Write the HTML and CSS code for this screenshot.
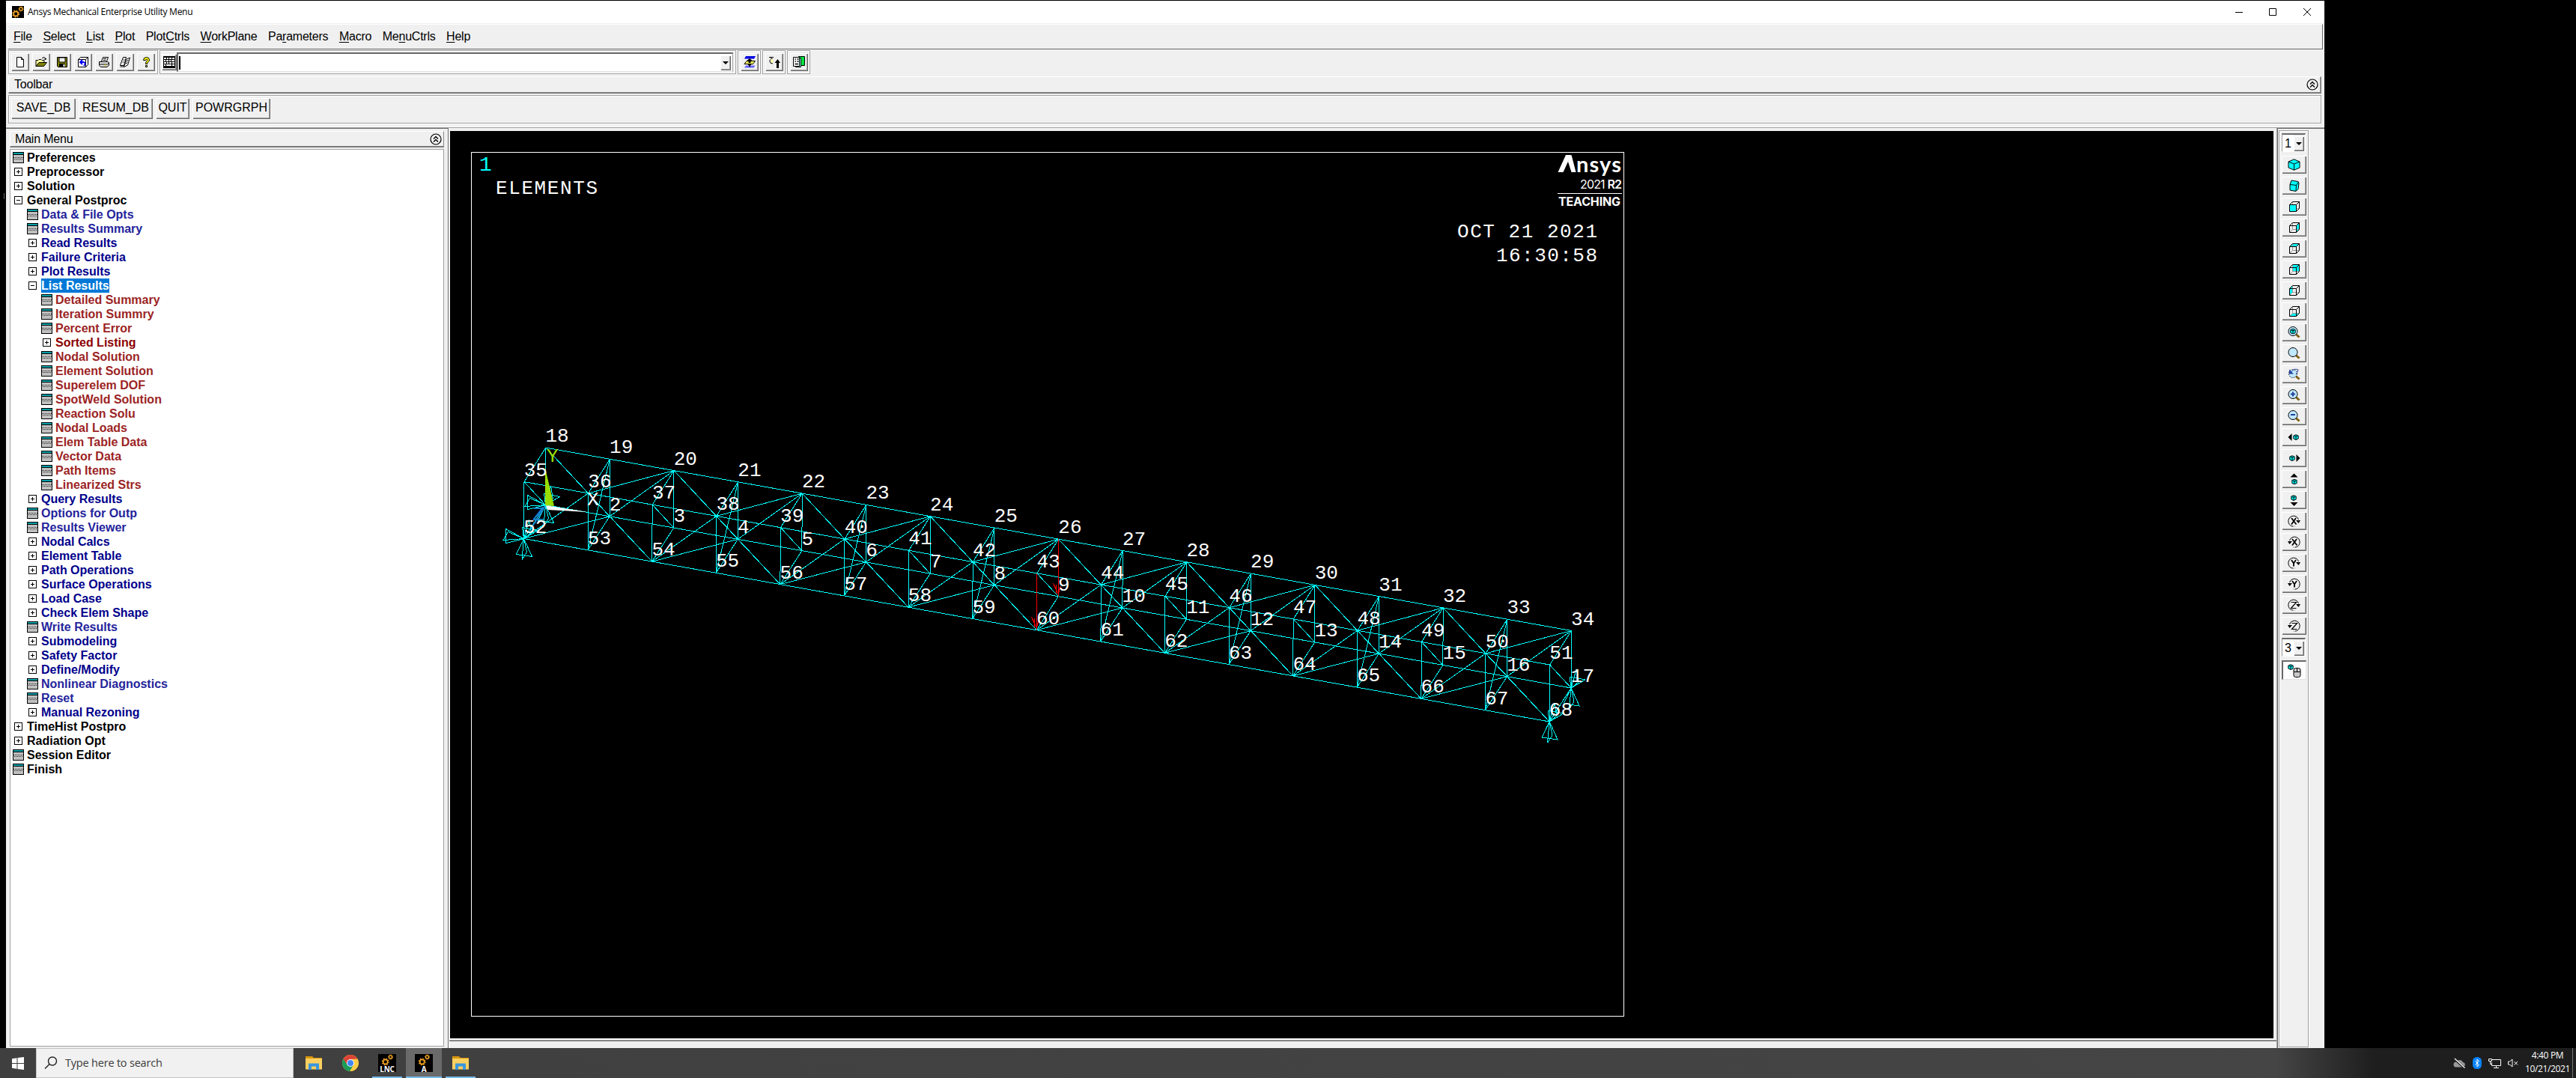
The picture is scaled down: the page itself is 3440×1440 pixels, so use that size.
FILE: index.html
```html
<!DOCTYPE html>
<html lang="en">
<head>
<meta charset="utf-8">
<title>Ansys Mechanical Enterprise Utility Menu</title>
<link rel="stylesheet" href="styles.css">
</head>
<body>
<svg class="defs" aria-hidden="true">
  <defs>
    <symbol id="gears" viewBox="0 0 16 16"><rect width="16" height="16" fill="#000"/><g fill="none" stroke="#f5a623"><circle cx="5.2" cy="10.4" r="3" stroke-width="1.6"/><circle cx="5.2" cy="10.4" r="4.4" stroke-width="1.2" stroke-dasharray="1.7 1.75"/><circle cx="12" cy="4" r="2" stroke-width="1.3"/><circle cx="12" cy="4" r="3.1" stroke-width="1" stroke-dasharray="1.2 1.23"/></g></symbol>
    <symbol id="new" viewBox="0 0 16 16"><path d="M3.5 1.5h6l3 3v10h-9zM9.5 1.5v3h3" fill="#fff" stroke="#000"/></symbol>
    <symbol id="open" viewBox="0 0 16 16"><path d="M1 13.500V5.500h3l1-1h3l1 1h3v3" fill="#ffffa0" stroke="#000"/><path d="M1 13.500l4-5h10.500l-4 5z" fill="#808000" stroke="#000"/><path d="M9 3q2-3 4.500-.5v2M12 3.500l1.500 1.500L15 3" fill="none" stroke="#000"/></symbol>
    <symbol id="save" viewBox="0 0 16 16"><path d="M1.500 1.500h13v13h-12l-1-1z" fill="#808000" stroke="#000"/><path d="M4 2h8v6H4z" fill="#f0f0f0" stroke="#000"/><path d="M4 10h8v4.500H4z"/><path d="M9.500 11h2v3h-2z" fill="#fff"/></symbol>
    <symbol id="resume" viewBox="0 0 16 16"><path d="M1.500 4.500l3-3h10v10l-3 3h-10zM1.500 4.500h10v10M11.500 4.500l3-3" fill="#fff" stroke="#000"/><path d="M4 8h5q2 .5 1.500 3L9 13M7 5L4 8l3 3" fill="none" stroke="#00f" stroke-width="1.800"/></symbol>
    <symbol id="print" viewBox="0 0 16 16"><path d="M4.500 7l2-5.500h7l-2 5.500" fill="#fff" stroke="#000"/><path d="M1.500 7.500h11l2 1v4l-3 2h-8l-2-2zM1.500 11h11l2-2M7 3.500h4M6.500 5.500h4M4 14.500h8" fill="#ddd" stroke="#000"/><path d="M8 12h3" stroke="#cc0"/></symbol>
    <symbol id="report" viewBox="0 0 16 16"><path d="M5.500 1.500h4l-3 11h-5zM9.500 4.500l5-2.500-3 10-5 2.500zM1.500 14h5M5.500 5h2M4.500 8h2M9.500 7l3-1.500M8.500 10l3-1.500" fill="#fff" stroke="#000"/></symbol>
    <symbol id="help" viewBox="0 0 16 16"><path d="M4.500 5.500q0-4 4-4t4 3.500q0 2-2 3.200-.8.600-.8 2.300H7.500q0-3 1.500-4 1-.7.500-2-1.500-1-2 1.000zM7.500 12.500h2v2h-2z" fill="#ff0" stroke="#000"/></symbol>
    <symbol id="keyboard" viewBox="0 0 16 16"><path d="M0 0h16v16H0z"/><path d="M1 2h3v2H1zM5 2h2v2H5zM8 2h3v2H8zM12 2h3v2h-3zM1 5h2v2H1zM4 5h3v2H4zM8 5h2v2H8zM11 5h4v2h-4zM1 8h3v2H1zM5 8h2v2H5zM8 8h3v2H8zM12 8h3v2h-3zM1 11h2v2H1zM4 11h7v2H4zM12 11h3v2h-3z" fill="#fff"/></symbol>
    <symbol id="raise" viewBox="0 0 16 16"><path d="M3 0h13l-2 3.500H1z" fill="#0000e0"/><path d="M4 6.500h11.500l-3 4H1z" fill="#ffff60" stroke="#000"/><path d="M3 12.500h12.500l-2 3H1z" fill="#6464ff"/><path d="M8 3L4.500 6h2v3h3V6h2zM8 9.500L5.500 12H7v2h2v-2h1.500z"/></symbol>
    <symbol id="reset" viewBox="0 0 16 16"><path d="M1 1.500h6M4 1.500v2M6 4q-4-1-4 3 0 3 4 3" fill="none" stroke="#000"/><path d="M3 4h3v5H4z" fill="#ffffa0"/><path d="M12.500 4L8.500 9H11v7h3V9h2z"/></symbol>
    <symbol id="contact" viewBox="0 0 16 16"><path d="M7.500.5h8v12h-8z" fill="#00e040" stroke="#000"/><path d="M3.500 2.500h7v12h-7z" fill="#a0ffff" stroke="#000"/><path d="M.5 1.500h8v12h-8z" fill="#fff" stroke="#000"/><path d="M2.500 4H4M5.500 4h2M2.500 7H4M5.500 7h2M2.500 10.500h4.500" stroke="#000" stroke-width="1.300"/></symbol>
    <symbol id="collapse" viewBox="0 0 16 16"><circle cx="8" cy="8" r="7" fill="none" stroke="#000" stroke-width="1.200"/><path d="M5 7.500L8 4.500l3 3M5 11.500L8 8.500l3 3" fill="none" stroke="#000" stroke-width="1.400"/></symbol>

    <symbol id="iso" viewBox="0 0 17 16"><path d="M8.500.8L16 4v8l-7.500 3.200L1 12V4z" fill="#0ff" stroke="#000"/><path d="M1 4l7.500 3L16 4M8.500 7v8" fill="none" stroke="#000"/></symbol>
    <symbol id="obl" viewBox="0 0 17 16"><path d="M5 1l9 1.500 1 2-1 8-3 3-8-1.500V6.500z" fill="#0ff" stroke="#000"/><path d="M3 6.500l8.500 1L14.500 3M11.500 7.500L11 15" fill="none" stroke="#000"/></symbol>
    <symbol id="wire" viewBox="0 0 17 16"><path d="M6.500 1.500v9h9M6.500 10.500l-4 4" fill="none" stroke="#999"/><path d="M2.500 5.500h9v9h-9zM2.500 5.500l4-4h9l-4 4M15.500 1.500v9l-4 4" fill="none" stroke="#000"/></symbol>
    <symbol id="front" viewBox="0 0 17 16"><use href="#wire"/><path d="M3 6h8v8H3z" fill="#0ff"/></symbol>
    <symbol id="right" viewBox="0 0 17 16"><path d="M11.500 5.500l4-4v9l-4 4z" fill="#0ff"/><use href="#wire"/></symbol>
    <symbol id="top" viewBox="0 0 17 16"><path d="M2.500 5.500l4-4h9l-4 4z" fill="#0ff"/><use href="#wire"/></symbol>
    <symbol id="back" viewBox="0 0 17 16"><path d="M6.500 1.500h9v9h-9z" fill="#0ff"/><use href="#wire"/></symbol>
    <symbol id="left" viewBox="0 0 17 16"><path d="M2.500 5.500l4-4v9l-4 4z" fill="#0ff"/><use href="#wire"/></symbol>
    <symbol id="bottom" viewBox="0 0 17 16"><path d="M2.500 14.500l4-4h9l-4 4z" fill="#0ff"/><use href="#wire"/></symbol>
    <symbol id="lens" viewBox="0 0 17 16"><path d="M11 10.500l4.500 4" stroke="#806010" stroke-width="3"/><circle cx="7" cy="6.500" r="6" fill="#c0e8ff" stroke="#000"/></symbol>
    <symbol id="mini" viewBox="0 0 8 8"><path d="M4 .8L7.200 2v4L4 7.500.8 6V2z" fill="#0ff" stroke="#000"/><path d="M2 3h4M4 3v4" stroke="#000"/></symbol>
    <symbol id="fit" viewBox="0 0 17 16"><use href="#lens"/><use href="#mini" x="3" y="2.500" width="8" height="8"/></symbol>
    <symbol id="zback" viewBox="0 0 17 16"><path d="M11 10.500l4.500 4" stroke="#806010" stroke-width="3"/><circle cx="7" cy="7" r="5.500" fill="#c0e8ff" stroke="#000" stroke-dasharray="1.500 1.500"/><path d="M2 1.500v6h6z" fill="#2040a0"/><path d="M5 4.500q4-5 9-2.500-1 4-3 6" fill="none" stroke="#2040a0"/></symbol>
    <symbol id="zin" viewBox="0 0 17 16"><use href="#lens"/><path d="M4 6.500h6M7 3.500v6" stroke="#2040a0" stroke-width="2"/></symbol>
    <symbol id="zout" viewBox="0 0 17 16"><use href="#lens"/><path d="M4 6h6" stroke="#2040a0" stroke-width="2"/></symbol>
    <symbol id="pl" viewBox="0 0 17 16"><path d="M5.500 3v10L.5 8z"/><use href="#mini" x="7" y="4" width="8" height="8"/></symbol>
    <symbol id="pr" viewBox="0 0 17 16"><path d="M11.500 3v10l5-5z"/><use href="#mini" x="2" y="4" width="8" height="8"/></symbol>
    <symbol id="pu" viewBox="0 0 17 16"><path d="M3.500 5.500h10l-5-5z"/><use href="#mini" x="5" y="7.500" width="8" height="8"/></symbol>
    <symbol id="pd" viewBox="0 0 17 16"><path d="M3.500 11h10l-5 5z"/><use href="#mini" x="4" y="1" width="8" height="8"/></symbol>
    <symbol id="cw" viewBox="0 0 17 16"><path d="M14.500 6A7 7 0 1 0 10 14.800" fill="none" stroke="#000" stroke-dasharray="30 2 3 2"/><path d="M11 7h6l-2.500 4z"/></symbol>
    <symbol id="ccw" viewBox="0 0 17 16"><path d="M2.500 6A7 7 0 1 1 7 14.800" fill="none" stroke="#000" stroke-dasharray="30 2 3 2"/><path d="M0 7h6L2.500 11z"/></symbol>
    <symbol id="lx" viewBox="0 0 17 16"><path d="M5 4l6.500 8.500M11 4l-6 8.500" stroke="#000" stroke-width="1.800"/></symbol>
    <symbol id="ly" viewBox="0 0 17 16"><path d="M5 4l3 4.500L11 4M8 8v4.500" fill="none" stroke="#000" stroke-width="1.800"/></symbol>
    <symbol id="lz" viewBox="0 0 17 16"><path d="M4.500 4.500h7l-7 8h7" fill="none" stroke="#000" stroke-width="1.200"/></symbol>
    <symbol id="mouse" viewBox="0 0 18 18"><use href="#mini" x="0" y="0" width="8" height="8"/><rect x="8" y="5.500" width="9" height="12" rx="2.500" fill="#c8c8c8" stroke="#000"/><path d="M8 10.500h9M12.500 5.500v5" stroke="#000"/></symbol>

    <symbol id="folder" viewBox="0 0 22 18"><path d="M0 0h9l2 2h11v3H0z" fill="#d8960c"/><path d="M0 3h22v14.500H0z" fill="#fcd060"/><path d="M4 9.500h14V18h-4v-4.500H8V18H4z" fill="#3b95dc"/></symbol>
  </defs>
</svg>

<div class="desktop">
  <div class="window">
    <header class="title">
      <svg width="16" height="16"><use href="#gears"/></svg>
      <span class="caption">Ansys Mechanical Enterprise Utility Menu</span>
      <svg class="sys" width="102" height="12" fill="none" stroke="#000"><path d="M0 6.500h10M45.500 1.500h9v9h-9zM91 1l10 10M101 1L91 11"/></svg>
    </header>
    <nav class="menubar"><span><u>F</u>ile</span><span><u>S</u>elect</span><span><u>L</u>ist</span><span><u>P</u>lot</span><span>Plot<u>C</u>trls</span><span><u>W</u>orkPlane</span><span>Pa<u>r</u>ameters</span><span><u>M</u>acro</span><span>Me<u>n</u>uCtrls</span><span><u>H</u>elp</span></nav>
    <div class="tools">
      <div class="group files">
        <button class="btn"><svg><use href="#new"/></svg></button><button class="btn"><svg><use href="#open"/></svg></button><button class="btn"><svg><use href="#save"/></svg></button><button class="btn"><svg><use href="#resume"/></svg></button><button class="btn"><svg><use href="#print"/></svg></button><button class="btn"><svg><use href="#report"/></svg></button><button class="btn"><svg><use href="#help"/></svg></button>
      </div>
      <div class="group command">
        <button class="btn kb"><svg><use href="#keyboard"/></svg></button>
        <div class="entry"><i class="caret"></i><button class="btn drop"></button></div>
      </div>
      <div class="group one"><button class="btn"><svg><use href="#raise"/></svg></button></div>
      <div class="group one"><button class="btn"><svg><use href="#reset"/></svg></button></div>
      <div class="group one"><button class="btn"><svg><use href="#contact"/></svg></button></div>
    </div>
    <div class="strip-head"><span>Toolbar</span><svg width="16" height="16"><use href="#collapse"/></svg></div>
    <div class="strip">
      <button class="btn w1">SAVE_DB</button><button class="btn w2">RESUM_DB</button><button class="btn w3">QUIT</button><button class="btn w4">POWRGRPH</button>
    </div>
    <main class="work">
      <aside class="side">
        <div class="side-head"><span>Main Menu</span><svg width="16" height="16"><use href="#collapse"/></svg></div>
        <ul class="tree">
          <li class="leaf">Preferences</li>
          <li class="plus">Preprocessor</li>
          <li class="plus">Solution</li>
          <li class="minus">General Postproc</li>
          <li class="leaf l1">Data &amp; File Opts</li>
          <li class="leaf l1">Results Summary</li>
          <li class="plus l1">Read Results</li>
          <li class="plus l1">Failure Criteria</li>
          <li class="plus l1">Plot Results</li>
          <li class="minus l1"><mark>List Results</mark></li>
          <li class="leaf l2">Detailed Summary</li>
          <li class="leaf l2">Iteration Summry</li>
          <li class="leaf l2">Percent Error</li>
          <li class="plus l2">Sorted Listing</li>
          <li class="leaf l2">Nodal Solution</li>
          <li class="leaf l2">Element Solution</li>
          <li class="leaf l2">Superelem DOF</li>
          <li class="leaf l2">SpotWeld Solution</li>
          <li class="leaf l2">Reaction Solu</li>
          <li class="leaf l2">Nodal Loads</li>
          <li class="leaf l2">Elem Table Data</li>
          <li class="leaf l2">Vector Data</li>
          <li class="leaf l2">Path Items</li>
          <li class="leaf l2">Linearized Strs</li>
          <li class="plus l1">Query Results</li>
          <li class="leaf l1">Options for Outp</li>
          <li class="leaf l1">Results Viewer</li>
          <li class="plus l1">Nodal Calcs</li>
          <li class="plus l1">Element Table</li>
          <li class="plus l1">Path Operations</li>
          <li class="plus l1">Surface Operations</li>
          <li class="plus l1">Load Case</li>
          <li class="plus l1">Check Elem Shape</li>
          <li class="leaf l1">Write Results</li>
          <li class="plus l1">Submodeling</li>
          <li class="plus l1">Safety Factor</li>
          <li class="plus l1">Define/Modify</li>
          <li class="leaf l1">Nonlinear Diagnostics</li>
          <li class="leaf l1">Reset</li>
          <li class="plus l1">Manual Rezoning</li>
          <li class="plus">TimeHist Postpro</li>
          <li class="plus">Radiation Opt</li>
          <li class="leaf">Session Editor</li>
          <li class="leaf">Finish</li>
        </ul>
      </aside>
      <section class="view">
        <svg class="plot" viewBox="601 176 2435 1212" width="2435" height="1212">
          <rect x="629.500" y="204.500" width="1539" height="1154" fill="none" stroke="#fff"/>
          <g id="truss"></g>
          <g class="mono">
            <text x="640" y="229" class="cyan" font-size="28">1</text>
            <text x="662" y="260" textLength="136">ELEMENTS</text>
            <text x="1946" y="318" textLength="187">OCT 21 2021</text>
            <text x="1998" y="350" textLength="135">16:30:58</text>
          </g>
          <g fill="#fff">
            <path d="M2080.500 231l10.500-23h7l-10.500 23z"/>
            <path d="M2095.500 210l3-2 6 23h-6l-4.500-14z"/>
            <text class="brand" x="2105" y="230.500" textLength="60">nsys</text>
            <text class="rel" x="2110" y="253" textLength="56">2021 <tspan font-weight="600">R2</tspan></text>
            <path d="M2080 259h86v1h-86z"/>
            <text class="edu" x="2081" y="276" textLength="83">TEACHING</text>
          </g>
        </svg>
      </section>
      <aside class="views">
        <div class="rail">
          <div class="spin"><span>1</span><button class="btn drop"></button></div>
          <button class="btn"><svg><use href="#iso"/></svg></button>
          <button class="btn"><svg><use href="#obl"/></svg></button>
          <button class="btn"><svg><use href="#front"/></svg></button>
          <button class="btn"><svg><use href="#right"/></svg></button>
          <button class="btn"><svg><use href="#top"/></svg></button>
          <button class="btn"><svg><use href="#back"/></svg></button>
          <button class="btn"><svg><use href="#left"/></svg></button>
          <button class="btn"><svg><use href="#bottom"/></svg></button>
          <button class="btn"><svg><use href="#fit"/></svg></button>
          <button class="btn"><svg><use href="#lens"/></svg></button>
          <button class="btn"><svg><use href="#zback"/></svg></button>
          <button class="btn"><svg><use href="#zin"/></svg></button>
          <button class="btn"><svg><use href="#zout"/></svg></button>
          <button class="btn"><svg><use href="#pl"/></svg></button>
          <button class="btn"><svg><use href="#pr"/></svg></button>
          <button class="btn"><svg><use href="#pu"/></svg></button>
          <button class="btn"><svg><use href="#pd"/></svg></button>
          <button class="btn"><svg><use href="#cw"/><use href="#lx"/></svg></button>
          <button class="btn"><svg><use href="#ccw"/><use href="#lx" x="1"/></svg></button>
          <button class="btn"><svg><use href="#cw"/><use href="#ly"/></svg></button>
          <button class="btn"><svg><use href="#ccw"/><use href="#ly" x="1"/></svg></button>
          <button class="btn"><svg><use href="#cw"/><use href="#lz"/></svg></button>
          <button class="btn"><svg><use href="#ccw"/><use href="#lz" x="1"/></svg></button>
          <div class="spin"><span>3</span><button class="btn drop"></button></div>
          <div class="dyn"><svg width="18" height="18"><use href="#mouse"/></svg></div>
        </div>
      </aside>
    </main>
  </div>
</div>

<footer class="taskbar">
  <div class="start"><svg width="16" height="17" fill="#fff"><path d="M0 2.300l6.500-1v6.700H0zM7.500 1.100L16 0v8H7.500zM0 9h6.500v6.700l-6.500-1zM7.500 9H16v8l-8.500-1.100z"/></svg></div>
  <div class="search"><svg width="18" height="18" fill="none" stroke="#222" stroke-width="1.400"><circle cx="11" cy="6.500" r="5.500"/><path d="M7 10.500L1 16.500"/></svg><span>Type here to search</span></div>
  <div class="app"><svg width="22" height="18"><use href="#folder"/></svg></div>
  <div class="app"><svg width="22" height="22" viewBox="0 0 22 22"><circle cx="11" cy="11" r="11" fill="#fc4"/><path d="M1.500 5.500A11 11 0 0 0 10 22l5-8.500-4-2.500z" fill="#1a9d58"/><path d="M1.500 5.500A11 11 0 0 1 20.500 5.500L11 6 6.500 13z" fill="#dc4437"/><circle cx="11" cy="11" r="5" fill="#fff"/><circle cx="11" cy="11" r="4" fill="#4285f4"/></svg></div>
  <div class="app run"><div class="tile"><svg width="17" height="16"><use href="#gears"/></svg><b>LNC</b></div></div>
  <div class="app run active"><div class="tile"><svg width="17" height="16"><use href="#gears"/></svg><b>A</b></div></div>
  <div class="app run"><svg width="22" height="18"><use href="#folder"/></svg></div>
  <div class="tray">
    <svg width="17" height="14"><path d="M4 12.500a3.500 3.500 0 0 1 0-7A5 5 0 0 1 13 6a3.300 3.300 0 0 1 0 6.500z" fill="#999"/><path d="M1 1l14 12.500" stroke="#222" stroke-width="3"/><path d="M2 1l13.500 12.500" stroke="#fff" stroke-width="1.200"/></svg>
    <svg width="12" height="16"><rect width="12" height="16" rx="5.500" fill="#0a84ff"/><path d="M3.500 5.500l5 5L6 13V3l2.500 2.500-5 5" fill="none" stroke="#fff"/></svg>
    <svg width="17" height="14" fill="none" stroke="#fff"><path d="M5 2.500h11.500v8H4.500V6M7 13.500h7M10.500 10.500v3M.5 1.500h4v3h-4zM2.500 4.500v4h2"/></svg>
    <svg width="14" height="12" fill="none" stroke="#fff"><path d="M.5 4h2l3.500-3v10l-3.500-3h-2zM8.500 4l4.500 4.500M13 4L8.500 8.500"/></svg>
    <div class="clock"><span>4:40 PM</span><span>10/21/2021</span></div>
    <i class="peek"></i>
  </div>
</footer>
<script src="truss.js"></script>
</body>
</html>
```

FILE: styles.css
```css
* { box-sizing: border-box; }
body { margin: 0; width: 3440px; height: 1440px; overflow: hidden; background: #000; display: flex; flex-direction: column; font: 16px "Liberation Sans", Arial, sans-serif; color: #000; }
.defs { position: absolute; width: 0; height: 0; }
svg { display: block; flex: none; }
button { font: inherit; color: inherit; padding: 0; margin: 0; border: 0; border-radius: 0; }
ul { list-style: none; margin: 0; padding: 0; }

.desktop { height: 1400px; padding: 1px 0 0 8px; flex: none; background: linear-gradient(#666, #666) 5px 258px / 1px 8px no-repeat #000; }
.window { width: 3096px; height: 1399px; background: #f0f0f0; display: flex; flex-direction: column; }

.title { height: 30px; background: #fff; display: flex; align-items: center; padding: 0 17px 0 8px; flex: none; }
.caption { font: 12px "Open Sans", sans-serif; margin: -1px 0 0 5px; letter-spacing: -.25px; }
.sys { margin-left: auto; margin-top: -1px; }

.menubar { height: 34px; margin: 1px 2px 0; padding: 0 0 0 7px; display: flex; align-items: center; gap: 14.5px; flex: none; border: 1px solid #fff; border-right-color: #696969; border-bottom: 1px solid #696969; letter-spacing: -.23px; }
.menubar u { text-underline-offset: 2px; }

.tools { height: 33px; margin: 1px 3px 0; display: flex; gap: 2px; flex: none; align-items: flex-start; }
.group { border: 1px solid #a0a0a0; outline: 1px solid #fff; outline-offset: -2px; height: 32px; display: flex; align-items: center; padding: 0 3px; gap: 4px; }
.files { width: 200px; }
.command { width: 770px; gap: 0; padding-left: 2px; }
.one { width: 31px; padding: 0 2.500px; }
.btn { background: #f0f0f0; height: 24px; width: 24px; display: flex; align-items: center; justify-content: center; flex: none; box-shadow: inset 1px 1px #fff, inset -1px -1px #696969, inset -2px -2px #a0a0a0; }
.btn svg { width: 16px; height: 16px; }
.kb { width: 20px; height: 22px; }
.entry { flex: 1; height: 26px; background: #fff; border: 1px solid #a0a0a0; border-top: 2px solid #696969; border-left: 2px solid #696969; border-bottom-color: #e3e3e3; display: flex; align-items: center; justify-content: space-between; padding-right: 2px; }
.caret { width: 2px; height: 18px; margin-left: 1px; background: #000; }
.drop { width: 14px; height: 20px; }
.drop::before { content: ""; border: 4px solid transparent; border-top-color: #000; border-bottom: 0; }

.strip-head { height: 23px; margin: 2px 4px 0 3px; padding: 0 2px 1px 7px; display: flex; justify-content: space-between; align-items: center; flex: none; border: 1px solid #fff; border-right: 2px solid #8a8a8a; border-bottom: 2px solid #7a7a7a; }
.strip-head span { letter-spacing: -.2px; }
.strip { height: 38px; margin: 2px 4px 0 3px; padding: 3px; display: flex; gap: 4px; flex: none; border: 1px solid #a0a0a0; box-shadow: inset 1px 1px #fff, 1px 1px #fff; }
.strip .btn { height: 28px; padding-bottom: 2px; }
.strip .w1 { width: 86px; }
.strip .w2 { width: 99px; }
.strip .w3 { width: 45px; }
.strip .w4 { width: 104px; }

.work { flex: 1; display: flex; margin-top: 5px; border-top: 1px solid #a0a0a0; box-shadow: inset 0 1px #696969, 0 -1px #fff; min-height: 0; }
.side { width: 591px; padding: 4px 5px 2px; display: flex; flex-direction: column; border-right: 1px solid #696969; }
.side-head { height: 22px; padding: 0 2px 0 6px; display: flex; justify-content: space-between; align-items: center; flex: none; border: 1px solid #fff; border-right: 1px solid #8a8a8a; border-bottom: 2px solid #7a7a7a; }
.side-head span { letter-spacing: -.2px; }
.tree { flex: 1; margin-top: 2px; padding: 1px 0 0 3px; background: #fff; border: 1px solid #a0a0a0; font-weight: bold; }
.tree li { height: 19px; line-height: 19px; display: flex; align-items: center; }
.tree li::before { content: ""; flex: none; }
.tree .l1 { padding-left: 19px; color: #00008b; }
.tree .l2 { padding-left: 38px; color: #8b0000; }
.tree .leaf.l1 { color: #24249b; }
.tree .leaf.l2 { color: #9b2424; }
.leaf::before { width: 13px; height: 13px; margin-right: 4px; border: 1px solid #000; background: linear-gradient(90deg, #222 1px, transparent 1px) 2px 6px / 2px 1px repeat-x, linear-gradient(90deg, #222 1px, transparent 1px) 1px 8px / 2px 1px repeat-x, linear-gradient(#00a0a8 2px, #000 2px, #000 3px, #c0c0c0 3px); }
.plus::before, .minus::before { width: 9px; height: 9px; margin: 0 6px 0 2px; border: 1px solid #000; background: linear-gradient(#000, #000) center / 5px 1px no-repeat #fff; }
.plus::before { background: linear-gradient(#000, #000) center / 5px 1px no-repeat, linear-gradient(#000, #000) center / 1px 5px no-repeat #fff; }
mark { background: #0078d7; color: #fff; }

.view { width: 2443px; padding: 4px 0 0 2px; flex: none; background: linear-gradient(#f0f0f0 1217px, #fff 1217px, #fff 1218px, #a0a0a0 1218px, #a0a0a0 1219px, #696969 1219px, #696969 1220px, #f0f0f0 1220px); border-right: 1px solid #696969; box-shadow: inset -1px 0 #a0a0a0, inset 1px 0 #fff; }
.plot { background: #000; }
.mono, .labels { font: 26px "Liberation Mono", "Courier New", monospace; fill: #fff; }
.cyan { fill: #0ff; }
.brand { font: bold 29px Lato, sans-serif; }
.rel { font: 16px Inter, sans-serif; }
.edu { font: bold 16px Inter, sans-serif; }
.member { stroke: #0ff; fill: none; shape-rendering: crispEdges; }
.load { stroke: #f00; fill: none; shape-rendering: crispEdges; }

.views { flex: 1; padding: 3px 0 1px 1px; }
.rail { width: 40px; height: 100%; padding: 3px 0 0 3px; border: 1px solid #a0a0a0; box-shadow: inset 1px 1px #fff, 1px 0 #fff; display: flex; flex-direction: column; gap: 4px; }
.rail > .btn { width: 33px; height: 24px; }
.rail > .btn > svg { width: 17px; height: 16px; }
.spin { width: 32px; height: 25px; padding: 2px 1px 1px 3px; display: flex; justify-content: space-between; align-items: center; border: 1px solid #a0a0a0; border-top: 2px solid #696969; border-right-color: #fff; border-bottom-color: #fff; background: linear-gradient(90deg, #fff 15px, #f0f0f0 15px); margin-bottom: 1px; }
.dyn { width: 33px; height: 26px; background: #fff; border: 1px solid #e3e3e3; border-top: 2px solid #696969; border-left: 2px solid #696969; display: flex; align-items: center; justify-content: center; }

.taskbar { height: 40px; flex: none; display: flex; background: linear-gradient(90deg, #3f3f3f, #454545 3040px, #333 3100px, #1e1e1e 3170px); color: #fff; }
.start { width: 48px; display: flex; align-items: center; justify-content: center; }
.search { width: 344px; background: #f1f1f1; border: 1px solid #c4c4c4; display: flex; align-items: center; padding-left: 10px; gap: 10px; font: 14.500px "Open Sans", sans-serif; letter-spacing: -.2px; color: #3a3a3a; margin-right: 2px; }
.search span { margin-top: -2px; }
.app { width: 49px; display: flex; align-items: center; justify-content: center; }
.run { box-shadow: inset 0 -2px #76b9ed; width: 40px; margin: 0 4px 0 5px; }
.run + .run { margin-left: 1px; }
.active { width: 48px; background: #6a6a6a; }
.tile { width: 24px; height: 24px; background: #000; display: flex; flex-direction: column; align-items: center; }
.tile b { font: bold 10px/8px "Open Sans", sans-serif; letter-spacing: -.3px; }
.tray { margin-left: auto; display: flex; align-items: center; gap: 9px; padding-right: 4px; }
.clock { font: 12px/18px "Open Sans", sans-serif; letter-spacing: -.35px; display: flex; flex-direction: column; align-items: center; width: 60px; margin-top: -2px; }
.peek { width: 1px; height: 40px; background: #777; margin-left: -6px; }
```

FILE: truss.js
```js
// Space truss: 16 bays, nodes 1-17 and 18-34 on the back face, 35-51 and 52-68 on the front face.
const BAYS = 16;
const at = (x, y) => i => [x + 85.6 * i, y + 15.28 * i];
const B = at(728.5, 675.5), T = at(728.8, 599), F = at(700, 644.6), G = at(699.5, 720.5);

const seg = (p, q) => `M${p[0].toFixed(1)} ${p[1].toFixed(1)}L${q[0].toFixed(1)} ${q[1].toFixed(1)}`;
let d = '', labels = '';

for (let i = 0; i <= BAYS; i++) {
  d += seg(T(i), F(i)) + seg(B(i), G(i));
  if (i !== 8) d += seg(T(i), B(i)) + seg(F(i), G(i));
  d += i % 2 ? seg(T(i), G(i)) : seg(F(i), B(i));
  if (i === BAYS) break;
  for (const n of [B, T, F, G]) d += seg(n(i), n(i + 1));
  const [a, b] = i % 2 ? [i + 1, i] : [i, i + 1];
  d += seg(T(a), B(b)) + seg(T(a), F(b)) + seg(G(a), F(b)) + seg(G(a), B(b));
}

// Constraint cones, drawn as crossed triangles with their tips on the node.
const cone = ([x, y], pts) => {
  const p = pts.map(([a, b]) => `${(x + a).toFixed(1)} ${(y + b).toFixed(1)}`);
  return `M${x} ${y}L${p[0]}L${p[1]}ZM${x} ${y}L${p[2]}L${p[3]}Z`;
};
const down = [[-10, 21], [11, 24], [-2.5, 28], [4, 18]];
const side = [[-24, -13], [-23.5, 6], [-27.5, 2], [-21, -9]];
const away = [[-2, -15], [19, -11], [7, -25], [10, -8]];
for (const n of [B(0), G(0)]) d += cone(n, down) + cone(n, side) + cone(n, away);
for (const n of [B(16), G(16)]) d += cone(n, down) + cone(n, away);

[[B, 1], [T, 18], [F, 35], [G, 52]].forEach(([n, first]) => {
  for (let i = 0; i <= BAYS; i++) {
    if (first + i === 1) continue;
    const [x, y] = n(i);
    labels += `<text x="${(x - .3).toFixed(1)}" y="${(y - 8).toFixed(1)}">${first + i}</text>`;
  }
});

const arrow = (p, q) => seg(p, q) + `M${q[0] - 7} ${q[1] - 18}L${q[0]} ${q[1] - 3}L${q[0] + 3} ${q[1] - 14}M${q[0] - 3} ${q[1] - 16}V${q[1] - 4}`;

document.getElementById('truss').innerHTML = `
  <path class="member" d="${d}"/>
  <path class="load" d="${arrow(T(8), B(8))}${arrow(F(8), G(8))}"/>
  <path fill="#9d0" d="M728 626L740 677L728 676Z"/>
  <path fill="#fff" d="M729 676L785 685L731 682Z"/>
  <path stroke="#1484c8" stroke-width="2" fill="none" d="M728 677L709 707M725 678L714 700"/>
  <g class="labels">
    <text x="711" y="696" style="fill:#1484c8">Z</text>
    ${labels}
    <text x="730" y="618" style="fill:#9d0">Y</text>
    <text x="784" y="676">X</text>
  </g>`;
```
